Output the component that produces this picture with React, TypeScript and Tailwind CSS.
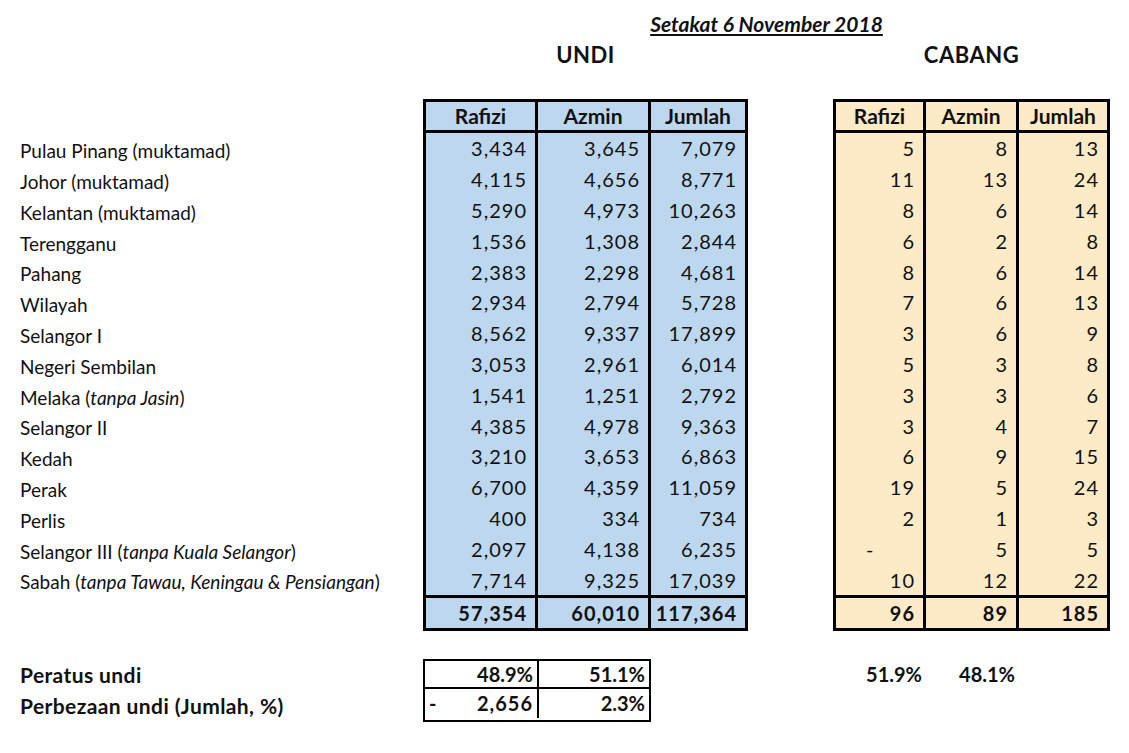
import React from "react";

type Row = { label: React.ReactNode; undi: string[]; cabang: string[] };

const rows: Row[] = [
  { label: "Pulau Pinang (muktamad)", undi: ["3,434", "3,645", "7,079"], cabang: ["5", "8", "13"] },
  { label: "Johor (muktamad)", undi: ["4,115", "4,656", "8,771"], cabang: ["11", "13", "24"] },
  { label: "Kelantan (muktamad)", undi: ["5,290", "4,973", "10,263"], cabang: ["8", "6", "14"] },
  { label: "Terengganu", undi: ["1,536", "1,308", "2,844"], cabang: ["6", "2", "8"] },
  { label: "Pahang", undi: ["2,383", "2,298", "4,681"], cabang: ["8", "6", "14"] },
  { label: "Wilayah", undi: ["2,934", "2,794", "5,728"], cabang: ["7", "6", "13"] },
  { label: "Selangor I", undi: ["8,562", "9,337", "17,899"], cabang: ["3", "6", "9"] },
  { label: "Negeri Sembilan", undi: ["3,053", "2,961", "6,014"], cabang: ["5", "3", "8"] },
  {
    label: (
      <>
        Melaka (<i>tanpa Jasin</i>)
      </>
    ),
    undi: ["1,541", "1,251", "2,792"],
    cabang: ["3", "3", "6"],
  },
  { label: "Selangor II", undi: ["4,385", "4,978", "9,363"], cabang: ["3", "4", "7"] },
  { label: "Kedah", undi: ["3,210", "3,653", "6,863"], cabang: ["6", "9", "15"] },
  { label: "Perak", undi: ["6,700", "4,359", "11,059"], cabang: ["19", "5", "24"] },
  { label: "Perlis", undi: ["400", "334", "734"], cabang: ["2", "1", "3"] },
  {
    label: (
      <>
        Selangor III (<i>tanpa Kuala Selangor</i> )
      </>
    ),
    undi: ["2,097", "4,138", "6,235"],
    cabang: ["-", "5", "5"],
  },
  {
    label: (
      <>
        Sabah (<i>tanpa Tawau, Keningau &amp; Pensiangan</i> )
      </>
    ),
    undi: ["7,714", "9,325", "17,039"],
    cabang: ["10", "12", "22"],
  },
];

const heads = ["Rafizi", "Azmin", "Jumlah"];

function DataTable({
  bg,
  widths,
  col,
  totals,
}: {
  bg: string;
  widths: string[];
  col: "undi" | "cabang";
  totals: string[];
}) {
  return (
    <div className={`flex border-[3px] border-black ${bg}`}>
      {heads.map((h, i) => (
        <div
          key={h}
          className={`flex flex-col ${widths[i]} ${i < 2 ? "border-r-[3px] border-black" : ""}`}
        >
          <div className="h-[31px] flex items-center justify-center border-b-[3px] border-black font-bold text-[21px]">
            {h}
          </div>
          {rows.map((r, j) => {
            const v = r[col][i];
            return (
              <div
                key={j}
                className={`h-[30.8px] flex items-center text-[20px] tracking-[1px] ${
                  v === "-" ? "justify-start pl-[30px]" : "justify-end pr-2"
                }`}
              >
                {v}
              </div>
            );
          })}
          <div className="h-[33px] flex items-center justify-end pr-2 border-t-[3px] border-black font-bold text-[20px] tracking-[1px]">
            {totals[i]}
          </div>
        </div>
      ))}
    </div>
  );
}

export default function App() {
  return (
    <div
      className="w-[1129px] h-[753px] bg-white text-[#111] overflow-hidden"
      style={{ fontFamily: "Lato, 'Open Sans', sans-serif" }}
    >
      {/* heading */}
      <div className="flex h-[99px]">
        <div className="w-[423px]" />
        <div className="w-[687px] flex flex-col">
          <div className="pt-[11px] leading-[26px] text-center text-[21px] font-bold italic underline underline-offset-2">
            Setakat 6 November 2018
          </div>
          <div className="flex mt-[5px] leading-[26px] text-[22px] font-bold tracking-[0.5px]">
            <div className="w-[325px] text-center">UNDI</div>
            <div className="w-[85px]" />
            <div className="w-[277px] text-center">CABANG</div>
          </div>
        </div>
      </div>

      {/* main tables */}
      <div className="flex">
        <div className="w-[423px] pl-5 pt-[37px] flex flex-col text-[19px]">
          {rows.map((r, j) => (
            <div key={j} className="h-[30.8px] flex items-center whitespace-nowrap">
              {r.label}
            </div>
          ))}
        </div>
        <DataTable
          bg="bg-[#bdd7ee]"
          widths={["w-[112px]", "w-[113px]", "w-[94px]"]}
          col="undi"
          totals={["57,354", "60,010", "117,364"]}
        />
        <div className="w-[85px]" />
        <DataTable
          bg="bg-[#fdeac6]"
          widths={["w-[90px]", "w-[93px]", "w-[88px]"]}
          col="cabang"
          totals={["96", "89", "185"]}
        />
      </div>

      {/* summary */}
      <div className="flex mt-[28px]">
        <div className="w-[423px] pl-5 flex flex-col font-bold text-[21px] tracking-[0.4px]">
          <div className="h-[30px] flex items-center mt-[1px]">Peratus undi</div>
          <div className="h-[32px] flex items-center">Perbezaan undi (Jumlah, %)</div>
        </div>
        <div className="w-[228px] border-2 border-black flex flex-col font-bold text-[20px]">
          <div className="flex h-[28px] border-b-2 border-black">
            <div className="w-[114px] border-r-2 border-black flex items-center justify-end pr-1">48.9%</div>
            <div className="flex-1 flex items-center justify-end pr-1">51.1%</div>
          </div>
          <div className="flex h-[29px]">
            <div className="w-[114px] border-r-2 border-black flex items-center justify-between pl-1 pr-1">
              <span>-</span>
              <span className="tracking-[1px]">2,656</span>
            </div>
            <div className="flex-1 flex items-center justify-end pr-1">2.3%</div>
          </div>
        </div>
        <div className="w-[182px]" />
        <div className="flex h-[30px] items-center font-bold text-[20px]">
          <div className="w-[93px] text-right pr-1">51.9%</div>
          <div className="w-[93px] text-right pr-1">48.1%</div>
        </div>
      </div>
    </div>
  );
}
